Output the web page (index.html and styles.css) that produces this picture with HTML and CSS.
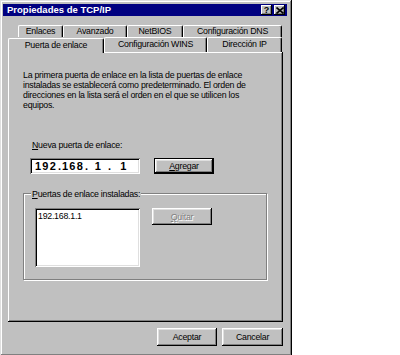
FILE: index.html
```html
<!DOCTYPE html>
<html lang="es">
<head>
<meta charset="utf-8">
<title>Propiedades de TCP/IP</title>
<link rel="stylesheet" href="styles.css">
</head>
<body>
<div class="window">
  <div class="titlebar">
    <span class="title">Propiedades de TCP/IP</span>
    <div class="tbtns">
      <span class="tbtn help">?</span>
      <span class="tbtn close"><svg width="8" height="7" viewBox="0 0 8 7"><path d="M0.5 0.5 L7.5 6.5 M7.5 0.5 L0.5 6.5" stroke="#000" stroke-width="1.6"/></svg></span>
    </div>
  </div>
  <div class="tabs">
    <div class="tabrow back">
      <div class="tab w-enl">Enlaces</div>
      <div class="tab w-ava">Avanzado</div>
      <div class="tab w-net">NetBIOS</div>
      <div class="tab w-dns">Configuración DNS</div>
    </div>
    <div class="tabrow front">
      <div class="tab sel w-pue">Puerta de enlace</div>
      <div class="tab w-wins">Configuración WINS</div>
      <div class="tab w-ip">Dirección IP</div>
    </div>
  </div>
  <div class="panel">
    <p class="desc">La primera puerta de enlace en la lista de puertas de enlace<br>instaladas se establecerá como predeterminado. El orden de<br>direcciones en la lista será el orden en el que se utilicen los<br>equipos.</p>
    <div class="field-label"><u>N</u>ueva puerta de enlace:</div>
    <div class="row">
      <div class="ipbox"><span class="oct o1">192</span><span class="dot">.</span><span class="oct o2">168</span><span class="dot">.</span><span class="oct o3">1</span><span class="dot">.</span><span class="oct o4">1</span></div>
      <div class="btn default"><span class="inner"><u>A</u>gregar</span></div>
    </div>
    <div class="group">
      <div class="legend"><u>P</u>uertas de enlace instaladas:</div>
      <div class="row">
        <div class="list">192.168.1.1</div>
        <div class="btn disabled"><span class="inner"><u>Q</u>uitar</span></div>
      </div>
    </div>
  </div>
  <div class="footer">
    <div class="btn w-ok"><span class="inner">Aceptar</span></div>
    <div class="btn w-cancel"><span class="inner">Cancelar</span></div>
  </div>
</div>
</body>
</html>
```
FILE: styles.css
```css
html, body {
  margin: 0;
  padding: 0;
  background: #fff;
}
body {
  width: 400px;
  height: 355px;
  overflow: hidden;
  font-family: "Liberation Sans", Arial, sans-serif;
  font-size: 8.8px;
  letter-spacing: -0.25px;
  color: #000;
}
.window {
  width: 292px;
  height: 356px;
  box-sizing: border-box;
  background: #c0c0c0;
  box-shadow: inset -1px -1px #000, inset 1px 1px #dfdfdf, inset -2px -2px #808080, inset 2px 2px #fff;
  padding: 4px 4px 0 3px;
  display: flex;
  flex-direction: column;
}
.titlebar {
  height: 12px;
  background: #000080;
  display: flex;
  align-items: center;
  justify-content: space-between;
  padding: 0 2px 0 4px;
  margin-right: 1px;
}
.title {
  color: #fff;
  font-weight: bold;
  font-size: 9.5px;
  letter-spacing: 0;
  line-height: 12px;
}
.tbtns {
  display: flex;
  gap: 2px;
}
.tbtn {
  width: 11px;
  height: 10px;
  background: #c0c0c0;
  box-shadow: inset -1px -1px #000, inset 1px 1px #fff, inset -2px -2px #808080;
  display: flex;
  align-items: center;
  justify-content: center;
  font-weight: bold;
  font-size: 9px;
  letter-spacing: 0;
  line-height: 10px;
}
.tabs {
  margin-top: 9px;
  display: flex;
  flex-direction: column;
}
.tabrow {
  display: flex;
}
.tabrow.back {
  margin-left: 15px;
  height: 12px;
}
.tabrow.front {
  margin-left: 5px;
  height: 15px;
  align-items: flex-end;
}
.tab {
  box-sizing: border-box;
  height: 12px;
  border-top: 1px solid #fff;
  border-left: 1px solid #fff;
  border-right: 1px solid #000;
  border-radius: 2px 2px 0 0;
  box-shadow: inset -1px 0 #808080;
  text-align: center;
  line-height: 11px;
  white-space: nowrap;
}
.tabrow.front .tab {
  height: 15px;
  line-height: 13px;
}
.tab.sel {
  height: 17px;
  margin-bottom: -1px;
  position: relative;
  background: #c0c0c0;
  z-index: 1;
}
.w-enl { width: 45px; }
.w-ava { width: 64px; }
.w-net { width: 56px; }
.w-dns { width: 99px; }
.w-pue { width: 96px; }
.w-wins { width: 103px; }
.w-ip { width: 75px; }
.panel {
  margin-left: 5px;
  width: 275px;
  height: 270px;
  box-sizing: border-box;
  box-shadow: inset -1px -1px #000, inset 1px 1px #fff, inset -2px -2px #808080;
  padding: 18px 0 0 15px;
}
.desc {
  margin: 0;
  line-height: 10px;
}
.field-label {
  margin: 30px 0 0 9px;
  line-height: 10px;
}
.row {
  display: flex;
  align-items: flex-start;
}
.ipbox {
  margin: 8px 0 0 7px;
  width: 110px;
  height: 16px;
  box-sizing: border-box;
  background: #fff;
  box-shadow: inset 1px 1px #808080, inset -1px -1px #fff, inset 2px 2px #000, inset -2px -2px #dfdfdf;
  display: flex;
  align-items: center;
  padding-left: 5px;
  font-weight: bold;
  font-size: 11px;
  letter-spacing: 1.2px;
  line-height: 12px;
}
.oct { display: inline-block; }
.o1, .o2 { width: 23px; }
.o3 { width: 19px; text-align: center; }
.o4 { width: 24px; text-align: center; }
.dot { display: inline-block; width: 4px; }
.btn {
  box-sizing: border-box;
  background: #c0c0c0;
  box-shadow: inset -1px -1px #000, inset 1px 1px #fff, inset -2px -2px #808080, inset 2px 2px #dfdfdf;
  display: flex;
  align-items: center;
  justify-content: center;
  line-height: 10px;
}
.btn.default {
  margin: 8px 0 0 14px;
  width: 60px;
  height: 16px;
  border: 1px solid #000;
}
.btn.disabled {
  margin: 0 0 0 12px;
  width: 60px;
  height: 17px;
  color: #808080;
  text-shadow: 1px 1px #fff;
}
.group {
  margin: 19px 0 0 0;
  width: 244px;
  height: 87px;
  box-sizing: border-box;
  border: 1px solid #808080;
  box-shadow: 1px 1px #fff, inset 1px 1px #fff;
  position: relative;
  padding: 14px 0 0 11px;
}
.legend {
  position: absolute;
  top: -5px;
  left: 7px;
  padding: 0 1px;
  background: #c0c0c0;
  line-height: 10px;
}
.list {
  width: 105px;
  height: 59px;
  box-sizing: border-box;
  background: #fff;
  box-shadow: inset 1px 1px #808080, inset -1px -1px #fff, inset 2px 2px #000, inset -2px -2px #dfdfdf;
  padding: 3px 0 0 3px;
  line-height: 10px;
}
.footer {
  margin-top: 6px;
  width: 280px;
  display: flex;
  justify-content: flex-end;
  gap: 5px;
}
.footer .btn {
  height: 18px;
}
.w-ok { width: 60px; }
.w-cancel { width: 61px; }
```
